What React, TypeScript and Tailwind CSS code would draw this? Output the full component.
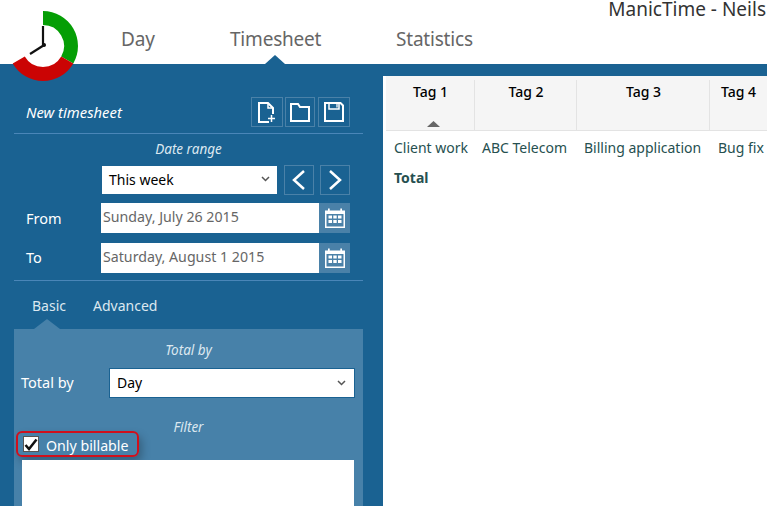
import React from "react";

const font = { fontFamily: '"Noto Sans", sans-serif' };

function Logo() {
  return (
    <svg className="absolute left-0 top-0 z-10" width="90" height="90" viewBox="0 0 90 90">
      <circle cx="43" cy="46" r="22" fill="#fff" />
      <path d="M43 11A35 35 0 0 1 73.300 63.500L61.200 56.500A21 21 0 0 0 43 25Z" fill="#059e05" />
      <path d="M73.300 63.500A35 35 0 0 1 12.700 63.500L24.800 56.500A21 21 0 0 0 61.200 56.500Z" fill="#cb0404" />
      <path d="M43 26V45.500" stroke="#111" strokeWidth="2.200" />
      <path d="M45 44.500L30 54" stroke="#111" strokeWidth="2.200" />
      <circle cx="44" cy="45" r="2" fill="#111" />
    </svg>
  );
}

function IconButton({ children, w }: { children: React.ReactNode; w: string }) {
  return (
    <div className={`flex h-[30px] ${w} items-center justify-center border border-[#4a81a8]`}>{children}</div>
  );
}

function Calendar() {
  return (
    <div className="flex h-[30px] w-[31px] items-center justify-center bg-[#4a81a8]">
      <svg width="20" height="20" viewBox="0 0 20 20" fill="#fff">
        <path d="M0 2.500H3V0.500H4.700V2.500H15.300V0.500H17V2.500H20V20H0ZM1.500 6V18.500H18.500V6Z" />
        <path d="M3.500 7.500H7V10.500H3.500ZM8.300 7.500H11.700V10.500H8.300ZM13 7.500H16.500V10.500H13ZM3.500 12H7V15H3.500ZM8.300 12H11.700V15H8.300ZM13 12H16.500V15H13Z" />
      </svg>
    </div>
  );
}

function Chevron() {
  return (
    <svg width="9" height="6" viewBox="0 0 9 6" fill="none" stroke="#555" strokeWidth="1.500">
      <path d="M1 1L4.500 4.500L8 1" />
    </svg>
  );
}

function DateRow({ label, value, mt, labelClass }: { label: string; value: string; mt: string; labelClass: string }) {
  return (
    <div className={`flex h-[30px] items-center ${mt}`}>
      <span className={`w-[75px] text-[14.500px] text-white ${labelClass}`}>{label}</span>
      <div className="flex h-[30px] w-[218px] items-center bg-white pb-[2px] pl-[2px] text-[14.200px] text-[#666]">{value}</div>
      <Calendar />
    </div>
  );
}

function Tag({ w, label, children }: { w: string; label: string; children?: React.ReactNode }) {
  return (
    <div className={`${w} relative flex h-[50px] shrink-0 justify-center border-r border-[#e3e3e3] pl-[1px] pt-[1px] text-[14px] font-medium text-black`}>
      {label}
      {children}
    </div>
  );
}

export default function App() {
  return (
    <div className="relative flex h-[506px] w-[767px] flex-col overflow-hidden bg-white" style={font}>
      <Logo />
      <header className="flex h-[64px] shrink-0 items-start">
        <nav className="flex pl-[121px] pt-[24px] text-[19px] leading-[30px] tracking-[-0.2px] text-[#666]">
          <span className="w-[109px]">Day</span>
          <span className="w-[166px]">Timesheet</span>
          <span>Statistics</span>
        </nav>
        <span className="ml-auto whitespace-nowrap pr-[1px] text-[19px] leading-[19px] text-[#333]">ManicTime - Neils</span>
      </header>
      <div className="relative flex min-h-0 flex-1 bg-[#1a6292]">
        <div className="absolute left-[265px] top-[-9px] h-0 w-0 border-x-[10px] border-b-[9px] border-x-transparent border-b-[#1a6292]" />
        <aside className="w-[383px] shrink-0 pl-[14px] pr-[20px] pt-[33px]">
          <div className="flex h-[30px] items-center pl-[12px] pr-[13px]">
            <span className="flex-1 pt-[1px] text-[14.800px] italic text-white">New timesheet</span>
            <div className="flex">
              <IconButton w="w-[32px]">
                <svg width="18" height="21" viewBox="0 0 18 21" fill="none" stroke="#fff" strokeWidth="2">
                  <path d="M11 20H1V1H10L15 6V12" />
                  <path d="M10 1V6H15" strokeWidth="1.500" />
                  <path d="M10 16.500H17M13.500 13V20" strokeWidth="1.500" />
                </svg>
              </IconButton>
              <div className="ml-[2px] mr-[3px]">
                <IconButton w="w-[30px]">
                  <svg width="20" height="19" viewBox="0 0 20 19" fill="none" stroke="#fff" strokeWidth="2">
                    <path d="M1 18V1H8L10 4H19V18Z" />
                  </svg>
                </IconButton>
              </div>
              <IconButton w="w-[32px]">
                <svg width="20" height="20" viewBox="0 0 20 20" fill="none" stroke="#fff" strokeWidth="2">
                  <path d="M1 1H16.500L19 3.500V19H1Z" />
                  <path d="M5 1.500V7H15V1.500" strokeWidth="1.500" />
                  <path d="M12 2V5.500H14V2Z" fill="#a9c4d6" stroke="none" />
                </svg>
              </IconButton>
            </div>
          </div>
          <div className="mt-[6px] h-[1px] bg-[#4a86b8]" />
          <div className="h-[31px] text-center text-[13.500px] italic leading-[30px] text-[#dce8f0]">Date range</div>
          <div className="flex h-[30px] items-center pl-[88px]">
            <div className="flex h-[28px] w-[175px] items-center justify-between bg-white pb-[2px] pl-[7px] pr-[7px] text-[14px] text-black">
              This week
              <Chevron />
            </div>
            <div className="ml-[7px] flex gap-[6px]">
              <IconButton w="w-[30px]">
                <svg width="14" height="22" viewBox="0 0 14 22" fill="none" stroke="#fff" strokeWidth="2.500">
                  <path d="M12 2L2 11L12 20" />
                </svg>
              </IconButton>
              <IconButton w="w-[30px]">
                <svg width="14" height="22" viewBox="0 0 14 22" fill="none" stroke="#fff" strokeWidth="2.500">
                  <path d="M2 2L12 11L2 20" />
                </svg>
              </IconButton>
            </div>
          </div>
          <div className="pl-[12px] pr-[13px]">
            <DateRow label="From" value="Sunday, July 26 2015" mt="mt-[8px]" labelClass="pt-[2px]" />
            <DateRow label="To" value="Saturday, August 1 2015" mt="mt-[10px]" labelClass="pb-[1px]" />
          </div>
          <div className="mt-[7px] h-[1px] bg-[#4a86b8]" />
          <div className="relative flex h-[48px] items-center pl-[18px] pt-[1px] text-[14px] text-[#dce8f0]">
            <span className="w-[61px]">Basic</span>
            <span>Advanced</span>
            <div className="absolute bottom-0 left-[20px] h-0 w-0 border-x-[13px] border-b-[10px] border-x-transparent border-b-[#4781a9]" />
          </div>
          <section className="h-[200px] bg-[#4781a9]">
            <div className="h-[39px] pt-[10px] text-center text-[13.500px] italic leading-[22px] text-[#dce8f0]">Total by</div>
            <div className="flex h-[30px] items-center pl-[7px]">
              <span className="w-[88px] text-[14.500px] text-white">Total by</span>
              <div className="flex h-[30px] w-[246px] items-center justify-between border border-[#1a6292] bg-white pb-[1px] pl-[7px] pr-[8px] text-[14px] text-black">
                Day
                <Chevron />
              </div>
            </div>
            <div className="h-[33px] pt-[18px] text-center text-[13.500px] italic leading-[22px] text-[#dce8f0]">Filter</div>
            <div className="ml-[2px] flex h-[26px] w-[123px] items-center rounded-[6px] border-2 border-[#d0101c] pl-[5px] shadow-[3px_5px_8px_rgba(0,0,0,0.25)]">
              <span className="flex h-[16px] w-[16px] items-center justify-center border border-[#555] bg-white">
                <svg width="14" height="13" viewBox="0 0 14 13" fill="none" stroke="#111" strokeWidth="2.500">
                  <path d="M1.500 7L5 11L12.500 1.500" />
                </svg>
              </span>
              <span className="ml-[7px] pt-[3px] text-[14.200px] text-white">Only billable</span>
            </div>
            <div className="ml-[8px] mt-[3px] h-[60px] w-[332px] bg-white" />
          </section>
        </aside>
        <main className="mt-[12px] min-w-0 flex-1 bg-white">
          <div className="ml-[3px] flex h-[55px] border-b border-[#e3e3e3] bg-[#f5f5f5] pt-[4px]">
            <Tag w="w-[89px]" label="Tag 1">
              <svg className="absolute left-[41px] top-[41px]" width="13" height="6" viewBox="0 0 13 6">
                <path d="M6.500 0L13 6H0Z" fill="#666" />
              </svg>
            </Tag>
            <Tag w="w-[102px]" label="Tag 2" />
            <Tag w="w-[133px]" label="Tag 3" />
            <div className="w-[60px] pt-[1px] text-center text-[14px] font-medium text-black">Tag 4</div>
          </div>
          <div className="ml-[11px] mt-[5px] flex h-[22px] items-center whitespace-nowrap text-[14px] text-[#265050]">
            <span className="w-[88px]">Client work</span>
            <span className="w-[102px]">ABC Telecom</span>
            <span className="w-[134px]">Billing application</span>
            <span>Bug fix</span>
          </div>
          <div className="ml-[11px] mt-[9px] text-[14px] font-bold text-[#265050]">Total</div>
        </main>
      </div>
    </div>
  );
}
